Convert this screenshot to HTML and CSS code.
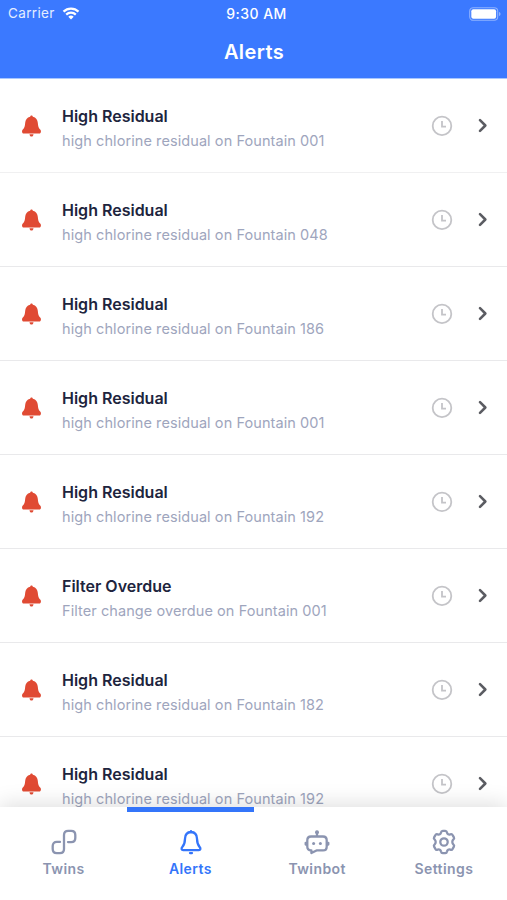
FILE: index.html
```html
<!DOCTYPE html>
<html lang="en">
<head>
<meta charset="utf-8">
<title>Alerts</title>
<link rel="stylesheet" href="styles.css">
</head>
<body>
<svg class="sprite" aria-hidden="true">
  <symbol id="bell" viewBox="0 0 20 22"><path d="M10 .4c.9 0 1.300.7 1.400 1.400 3.100.7 4.700 3 4.900 6 .2 3.500.8 5.400 2.600 7 .9.9.8 3.800-1 3.800H2.100c-1.800 0-1.900-2.900-1-3.800 1.800-1.600 2.400-3.500 2.600-7 .2-3 1.800-5.300 4.900-6C8.700 1.100 9.100.4 10 .4ZM8 19.300h4c-.2 1.500-.9 2.300-2 2.300s-1.800-.8-2-2.300Z"/></symbol>
  <symbol id="clock" viewBox="0 0 22 22"><circle cx="11" cy="10.900" r="9.300"/><path d="M11 5.900v5.700h4"/></symbol>
  <symbol id="chevron" viewBox="0 0 10 14"><path d="m2.200 2 5 5-5 5"/></symbol>
</svg>
<div class="app">
  <header class="header">
    <div class="status">
      <div class="carrier"><span>Carrier</span>
        <svg class="wifi" viewBox="0 0 18 13"><path d="M1.500 4.600a10.800 10.800 0 0 1 15 0M4.200 7.600a6.900 6.900 0 0 1 9.600 0"/><path class="solid" d="M6.300 9.800a4 4 0 0 1 5.400 0L9 12.500Z"/></svg>
      </div>
      <span class="time">9:30 AM</span>
      <svg class="battery" viewBox="0 0 32 14"><rect class="case" x=".7" y=".7" width="28" height="12.600" rx="3.500"/><rect x="2.300" y="2.300" width="24.800" height="9.400" rx="2"/><path class="cap" d="M30 5c2 .6 2 3.400 0 4Z"/></svg>
    </div>
    <h1>Alerts</h1>
  </header>
  <main class="list">
    <article class="row"><svg class="bell"><use href="#bell"/></svg><div class="copy"><h2>High Residual</h2><p>high chlorine residual on Fountain 001</p></div><svg class="clock"><use href="#clock"/></svg><svg class="chevron"><use href="#chevron"/></svg></article>
    <article class="row"><svg class="bell"><use href="#bell"/></svg><div class="copy"><h2>High Residual</h2><p>high chlorine residual on Fountain 048</p></div><svg class="clock"><use href="#clock"/></svg><svg class="chevron"><use href="#chevron"/></svg></article>
    <article class="row"><svg class="bell"><use href="#bell"/></svg><div class="copy"><h2>High Residual</h2><p>high chlorine residual on Fountain 186</p></div><svg class="clock"><use href="#clock"/></svg><svg class="chevron"><use href="#chevron"/></svg></article>
    <article class="row"><svg class="bell"><use href="#bell"/></svg><div class="copy"><h2>High Residual</h2><p>high chlorine residual on Fountain 001</p></div><svg class="clock"><use href="#clock"/></svg><svg class="chevron"><use href="#chevron"/></svg></article>
    <article class="row"><svg class="bell"><use href="#bell"/></svg><div class="copy"><h2>High Residual</h2><p>high chlorine residual on Fountain 192</p></div><svg class="clock"><use href="#clock"/></svg><svg class="chevron"><use href="#chevron"/></svg></article>
    <article class="row"><svg class="bell"><use href="#bell"/></svg><div class="copy"><h2>Filter Overdue</h2><p>Filter change overdue on Fountain 001</p></div><svg class="clock"><use href="#clock"/></svg><svg class="chevron"><use href="#chevron"/></svg></article>
    <article class="row"><svg class="bell"><use href="#bell"/></svg><div class="copy"><h2>High Residual</h2><p>high chlorine residual on Fountain 182</p></div><svg class="clock"><use href="#clock"/></svg><svg class="chevron"><use href="#chevron"/></svg></article>
    <article class="row"><svg class="bell"><use href="#bell"/></svg><div class="copy"><h2>High Residual</h2><p>high chlorine residual on Fountain 192</p></div><svg class="clock"><use href="#clock"/></svg><svg class="chevron"><use href="#chevron"/></svg></article>
  </main>
  <nav class="tabs">
    <a class="tab"><svg viewBox="0 0 26 26"><path d="M9 12.900H5.800c-2.600 0-4.100 1.500-4.100 4.100v3.100c0 2.600 1.500 4.100 4.100 4.100h3.100c2.600 0 4.100-1.500 4.100-4.100V5.900c0-2.600 1.500-4.100 4.100-4.100h3.100c2.600 0 4.100 1.500 4.100 4.100V9c0 2.600-1.500 4.100-4.100 4.100H17"/></svg><span>Twins</span></a>
    <a class="tab active"><svg viewBox="0 0 26 26"><path d="M13 2.200v.8c-3.900.2-5.900 3-6 6.700-.1 4.300-.8 6.300-2.700 8.400-1.300 1.400-.7 3 .8 3h15.800c1.500 0 2.100-1.600.8-3-1.900-2.100-2.600-4.100-2.700-8.400-.1-3.700-2.100-6.500-6-6.700"/><path d="M12 24.100h2"/></svg><span>Alerts</span></a>
    <a class="tab"><svg viewBox="0 0 26 26"><path d="M13 3v4.500M7 7.500h12c2.300 0 3.700 1.400 3.700 3.700v6.500c0 2.300-1.400 3.700-3.700 3.700h-6.500L7.400 24v-2.600H7c-2.300 0-3.700-1.400-3.700-3.700v-6.500c0-2.300 1.400-3.700 3.700-3.700ZM1.700 13.800v1.700M24.300 13.800v1.700"/><g class="solid"><circle cx="13" cy="3.300" r="2"/><circle cx="9.600" cy="14.500" r="1.500"/><circle cx="16.400" cy="14.500" r="1.500"/></g></svg><span>Twinbot</span></a>
    <a class="tab"><svg viewBox="0 0 26 26"><path d="M11.700 1.800h2.600c1 0 1.500.7 1.700 1.700.3 1.700 1.700 2.500 3.300 1.900 1-.4 1.900-.1 2.300.7l1.300 2.200c.5.900.2 1.700-.6 2.400-1.300 1.100-1.300 3.500 0 4.600.8.700 1.100 1.500.6 2.400l-1.300 2.200c-.4.800-1.300 1.100-2.300.7-1.600-.6-3 .2-3.300 1.900-.2 1-.7 1.700-1.700 1.700h-2.600c-1 0-1.500-.7-1.700-1.700-.3-1.700-1.700-2.500-3.300-1.900-1 .4-1.900.1-2.300-.7l-1.300-2.200c-.5-.9-.2-1.700.6-2.400 1.300-1.100 1.300-3.500 0-4.600-.8-.7-1.100-1.500-.6-2.400l1.300-2.200c.4-.8 1.300-1.100 2.300-.7 1.600.6 3-.2 3.300-1.900.2-1 .7-1.700 1.700-1.700Z"/><circle cx="13" cy="13" r="3.700"/></svg><span>Settings</span></a>
  </nav>
</div>
</body>
</html>
```
FILE: styles.css
```css
* { box-sizing: border-box; }
body { margin: 0; background: #fff; font-family: Inter, "Liberation Sans", sans-serif; }
h1, h2, p { margin: 0; }
svg { display: block; flex: none; }
.sprite { position: absolute; width: 0; height: 0; }
.app { height: 900px; display: flex; flex-direction: column; overflow: hidden; }

.header { flex: none; height: 79px; background: #3b79ff; color: #fff; border-bottom: 1px solid #a9c7ff; }
.status { height: 27px; padding: 0 6px 0 8px; display: grid; grid-template-columns: 1fr auto 1fr; align-items: center; font-size: 13.5px; line-height: 27px; }
.carrier { display: flex; align-items: center; gap: 7px; letter-spacing: .35px; color: #e4edff; }
.wifi { width: 18px; height: 13px; fill: none; stroke: #fff; stroke-width: 2.2; }
.wifi .solid { fill: #fff; stroke: none; }
.time { padding-left: 4px; font-size: 14px; font-weight: 500; letter-spacing: .45px; }
.battery { width: 32px; height: 14px; justify-self: end; fill: #fff; }
.battery .case { fill: none; stroke: #8fb2ff; stroke-width: 1.1; }
.battery .cap { fill: #8fb2ff; }
h1 { padding-left: 1px; font-size: 20px; line-height: 50px; font-weight: 600; text-align: center; letter-spacing: .4px; }

.list { flex: 1; min-height: 0; overflow: hidden; }
.row { height: 94px; padding: 0 18px 0 21px; display: flex; align-items: center; border-bottom: 1px solid #e9e9eb; }
.row:first-child { border-bottom-color: #f0f0f1; }
.bell { width: 21px; height: 22px; fill: #e04a33; }
.copy { flex: 1; padding: 6px 0 0 20px; }
h2 { font-size: 16px; line-height: 24px; font-weight: 600; color: #20243d; }
p { font-size: 14.5px; line-height: 25px; color: #9ea5bd; letter-spacing: .08px; }
.clock { width: 22px; height: 22px; margin-right: 24px; fill: none; stroke: #c4c4c8; stroke-width: 1.8; }
.chevron { width: 12px; height: 15px; fill: none; stroke: #5b5c62; stroke-width: 2.4; stroke-linecap: round; stroke-linejoin: round; }

.tabs { flex: none; position: relative; height: 93px; background: #fff; display: grid; grid-template-columns: repeat(4, 1fr); box-shadow: 0 -3px 20px rgba(0, 0, 0, .13); }
.tab { display: flex; flex-direction: column; align-items: center; padding-top: 17px; border-top: 5px solid transparent; color: #8b94b0; font-size: 14px; line-height: 20px; font-weight: 600; letter-spacing: .4px; }
.tab svg { width: 26px; height: 26px; margin: 0 0 4px 1px; fill: none; stroke: currentColor; stroke-width: 2.3; stroke-linecap: round; stroke-linejoin: round; }
.tab .solid { fill: currentColor; stroke: none; }
.tab span { padding-left: .5px; }
.active { color: #3475fa; border-top-color: #3475fa; }
```
